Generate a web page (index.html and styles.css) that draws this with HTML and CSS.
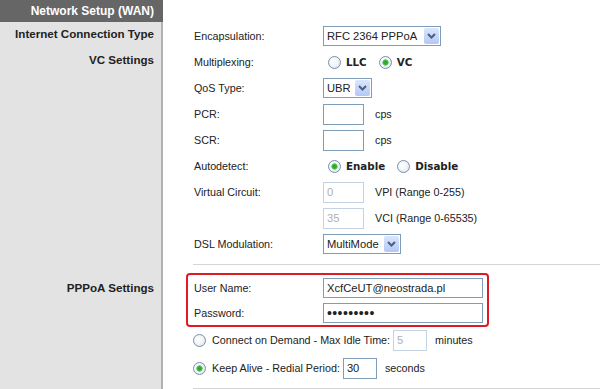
FILE: index.html
```html
<!DOCTYPE html>
<html lang="en">
<head>
    <meta charset="UTF-8">
    <meta name="viewport" content="width=device-width, initial-scale=1.0">
    <title>Network Setup (WAN)</title>
    <link rel="stylesheet" href="styles.css">
</head>
<body>

    <div class="page">
        <div class="side side-head">Network Setup (WAN)</div>
        <div class="main main-head"></div>

        <div class="side side-first">Internet Connection Type</div>
        <div class="main main-first">
            <div class="row">
                <span class="label">Encapsulation:</span>
                <span class="combo combo-wide">
                    <select><option>RFC 2364 PPPoA</option></select>
                    <span class="combo-btn"><svg width="9" height="6" viewBox="0 0 9 6"><path d="M1 1 L4.5 4.5 L8 1" fill="none" stroke="#4a5f86" stroke-width="2"/></svg></span>
                </span>
            </div>
        </div>

        <div class="side side-vc">VC Settings</div>
        <div class="main">
            <div class="row">
                <span class="label">Multiplexing:</span>
                <label class="choice"><input type="radio" name="mux"> LLC</label>
                <label class="choice"><input type="radio" name="mux" checked> VC</label>
            </div>
            <div class="row">
                <span class="label">QoS Type:</span>
                <span class="combo combo-qos">
                    <select><option>UBR</option></select>
                    <span class="combo-btn"><svg width="9" height="6" viewBox="0 0 9 6"><path d="M1 1 L4.5 4.5 L8 1" fill="none" stroke="#4a5f86" stroke-width="2"/></svg></span>
                </span>
            </div>
            <div class="row">
                <span class="label">PCR:</span>
                <input type="text" class="field field-num">
                <span class="unit">cps</span>
            </div>
            <div class="row">
                <span class="label">SCR:</span>
                <input type="text" class="field field-num">
                <span class="unit">cps</span>
            </div>
            <div class="row">
                <span class="label">Autodetect:</span>
                <label class="choice"><input type="radio" name="auto" checked> Enable</label>
                <label class="choice"><input type="radio" name="auto"> Disable</label>
            </div>
            <div class="row">
                <span class="label">Virtual Circuit:</span>
                <input type="text" class="field field-num" value="0" disabled>
                <span class="unit">VPI (Range 0-255)</span>
            </div>
            <div class="row">
                <span class="label"></span>
                <input type="text" class="field field-num" value="35" disabled>
                <span class="unit">VCI (Range 0-65535)</span>
            </div>
            <div class="row">
                <span class="label">DSL Modulation:</span>
                <span class="combo combo-dsl">
                    <select><option>MultiMode</option></select>
                    <span class="combo-btn"><svg width="9" height="6" viewBox="0 0 9 6"><path d="M1 1 L4.5 4.5 L8 1" fill="none" stroke="#4a5f86" stroke-width="2"/></svg></span>
                </span>
            </div>
            <div class="divider"></div>
        </div>

        <div class="side side-pppoa">PPPoA Settings</div>
        <div class="main">
            <div class="highlight">
                <div class="row row-box">
                    <span class="label">User Name:</span>
                    <input type="text" class="field field-long" value="XcfCeUT@neostrada.pl">
                </div>
                <div class="row row-box">
                    <span class="label">Password:</span>
                    <input type="password" class="field field-long field-pass" value="secret123">
                </div>
            </div>
            <div class="row row-opt">
                <input type="radio" name="conn" class="opt-radio">
                <span>Connect on Demand - Max Idle Time:</span>
                <input type="text" class="field field-small" value="5" disabled>
                <span class="unit unit-near">minutes</span>
            </div>
            <div class="row row-opt row-keep">
                <input type="radio" name="conn" class="opt-radio" checked>
                <span>Keep Alive - Redial Period:</span>
                <input type="text" class="field field-small" value="30">
                <span class="unit unit-near">seconds</span>
            </div>
            <div class="divider"></div>
        </div>
    </div>

</body>
</html>
```

FILE: styles.css
```css
body {
    margin: 0;
    font-family: Arial, "Liberation Sans", sans-serif;
    font-size: 10.75px;
    color: #222;
    background: #fff;
}

.page {
    display: grid;
    grid-template-columns: 163px 1fr;
    grid-template-rows: 22px auto auto 1fr;
    min-height: 389px;
}

.side {
    box-sizing: border-box;
    background: #e3e3e3;
    border-right: 2px solid #b2b2b2;
    padding-right: 7px;
    text-align: right;
    font-weight: bold;
    font-size: 11.6px;
    color: #222;
}

.side-head {
    background: #666;
    border-right-color: #666;
    color: #fff;
    font-size: 12px;
    line-height: 22px;
}

.side-first {
    line-height: 24px;
}

.side-vc {
    line-height: 22px;
}

.side-pppoa {
    padding-top: 10px;
    line-height: 26px;
}

.main {
    padding: 0 16px 0 31px;
}

.main-first {
    padding-top: 1px;
}

.row {
    display: flex;
    align-items: center;
    height: 26px;
}

.label {
    width: 129px;
    flex-shrink: 0;
}

/* combo boxes */
.combo {
    display: inline-flex;
    box-sizing: border-box;
    height: 20px;
    border: 1px solid #7f9db9;
    background: #fff;
}

.combo select {
    appearance: none;
    -webkit-appearance: none;
    border: none;
    background: transparent;
    font-family: Arial, "Liberation Sans", sans-serif;
    font-size: 11.2px;
    color: #222;
    padding: 0 0 0 3px;
    flex: 1;
    outline: none;
}

.combo-btn {
    display: flex;
    align-items: center;
    justify-content: center;
    width: 15px;
    margin: 1px;
    border-radius: 2px;
    background: linear-gradient(#dbe6fd, #b4c8f4);
}

.combo-wide { width: 118px; }
.combo-qos { width: 49px; }
.combo-dsl { width: 78px; }

/* text fields */
.field {
    box-sizing: border-box;
    height: 21px;
    border: 1px solid #7f9db9;
    padding: 0 3px;
    font-family: Arial, "Liberation Sans", sans-serif;
    font-size: 11.2px;
    color: #222;
    background: #fff;
    outline: none;
}

.field:disabled {
    border-color: #c4d2e2;
    color: #b0b0b0;
    background: #fff;
}

.field-num { width: 41px; }
.field-long { width: 160px; height: 20px; }
.field-small { width: 34px; margin-left: 3px; }

.field-pass {
    font-size: 14px;
    letter-spacing: 0.4px;
}

.unit {
    margin-left: 11px;
}

.unit-near {
    margin-left: 8px;
}

/* radios */
input[type="radio"] {
    appearance: none;
    -webkit-appearance: none;
    box-sizing: border-box;
    width: 13px;
    height: 13px;
    margin: 0 5px 0 5px;
    border: 1px solid #7690b0;
    border-radius: 50%;
    background: radial-gradient(circle at 40% 40%, #fff 0, #f3f5f8 45%, #d6dde6 100%);
}

input[type="radio"]:checked {
    background: radial-gradient(circle, #2aa12a 0, #34b334 2px, #7fd47f 3px, transparent 3.5px),
                radial-gradient(circle at 40% 40%, #fff 0, #f3f5f8 45%, #d6dde6 100%);
}

.choice {
    display: flex;
    align-items: center;
    font-family: "DejaVu Sans", Verdana, sans-serif;
    font-weight: bold;
    font-size: 10.3px;
    color: #222;
    margin-right: 7px;
}

.divider {
    height: 1px;
    background: #d4d4d4;
    margin-top: 7px;
    margin-left: -1px;
}

/* highlighted credentials */
.highlight {
    width: fit-content;
    margin: 8px 0 0 -8px;
    padding: 0 4px 0 6px;
    border: 2px solid #de1a22;
    border-radius: 4px;
}

.row-box {
    height: 25px;
}

.row-opt .opt-radio {
    margin: 0 6px 0 -1px;
}

.row-keep {
    margin-top: 2px;
}
```
